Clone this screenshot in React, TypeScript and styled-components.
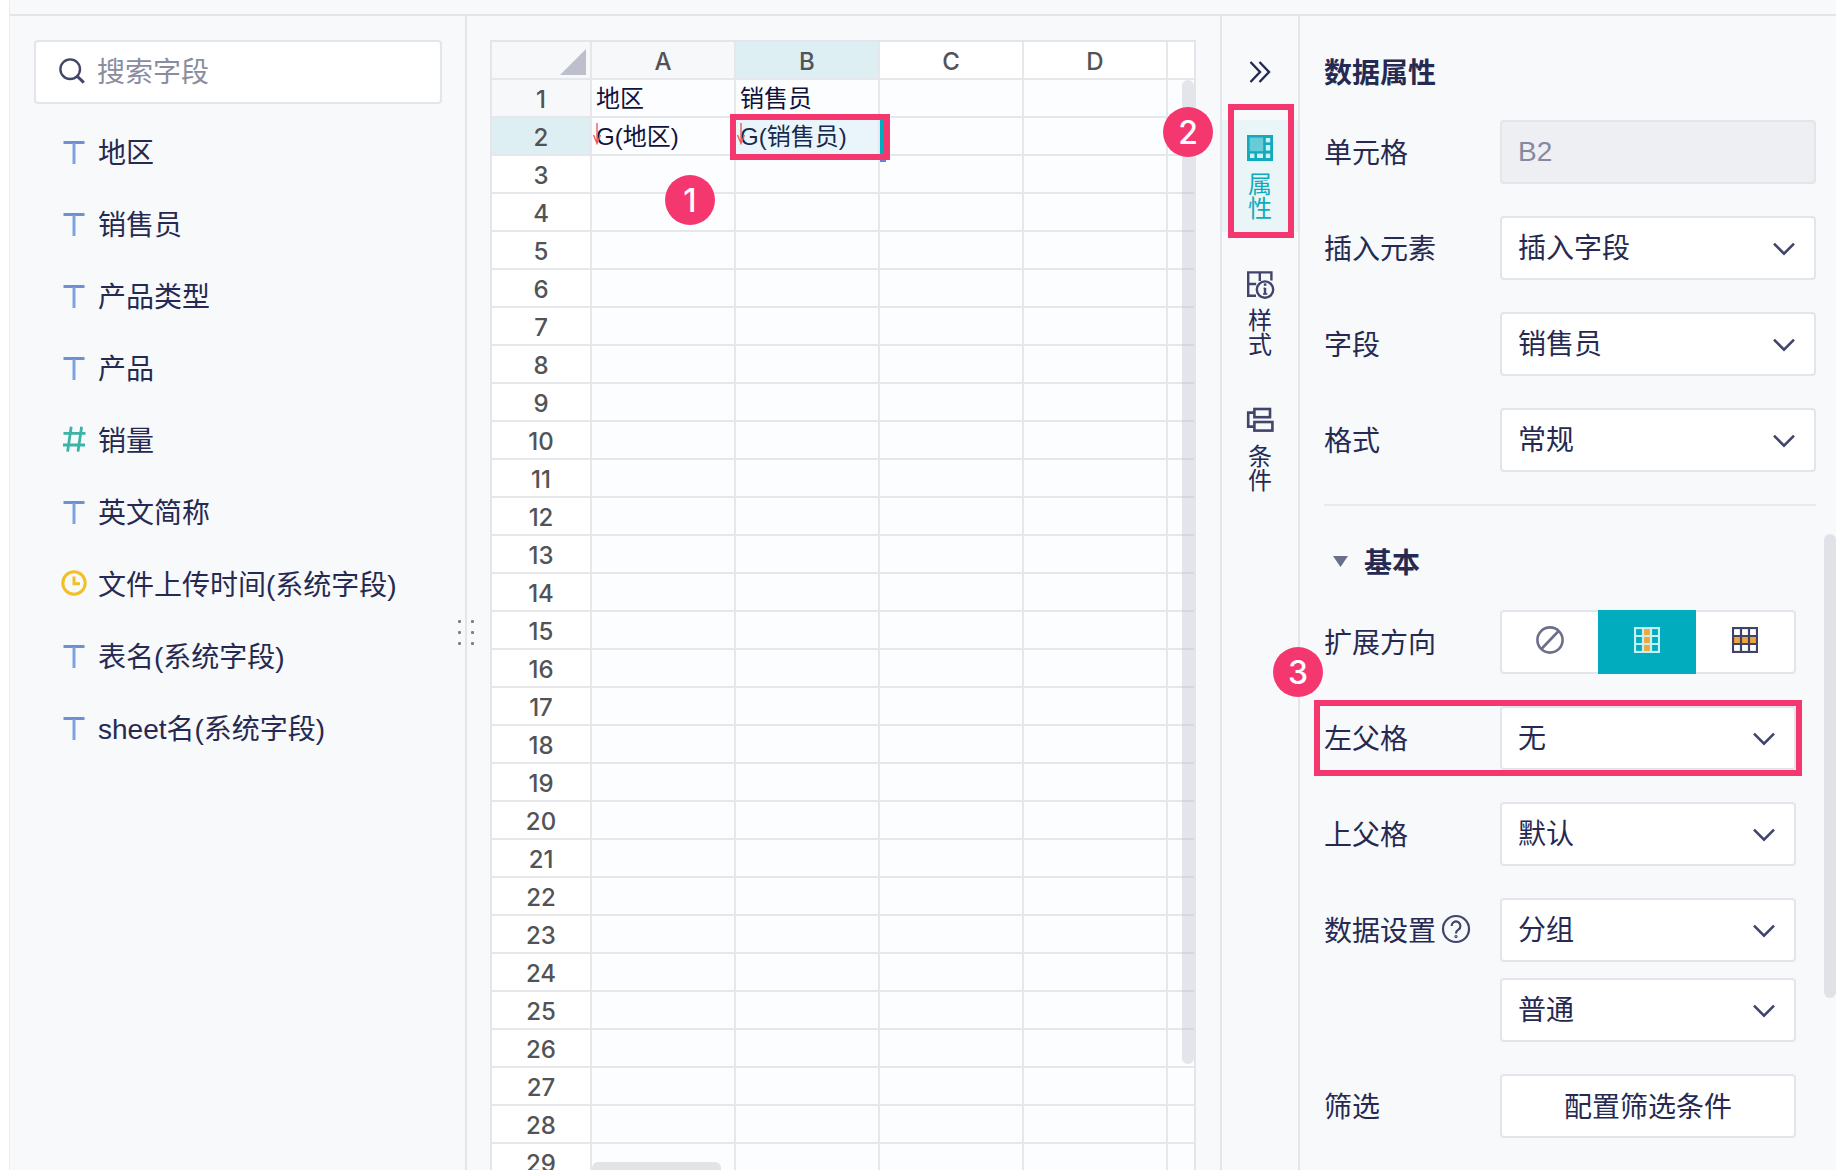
import React from 'react';
import styled, { createGlobalStyle, css } from 'styled-components';

const color = {
  text: '#262a52',
  muted: '#8a8d9f',
  line: '#e3e5eb',
  grid: '#e6e7ea',
  panel: '#f7f9fb',
  white: '#ffffff',
  teal: '#02acbf',
  mark: '#f5376f',
  headOn: '#deeff3',
  icon: '#41456a',
};

const cjk = '"Noto Sans CJK SC", sans-serif';

const Global = createGlobalStyle`
  *, *::before, *::after { box-sizing: border-box; }
  body { margin: 0; background: #ffffff; }
  body, button, input, select {
    font-family: "Liberation Sans", ${cjk};
    font-size: 28px;
    color: ${color.text};
  }
  h2, h3, ul, fieldset { margin: 0; padding: 0; border: 0; min-width: 0; }
`;

const Page = styled.div`
  display: flex;
  flex-direction: column;
  height: 100vh;
  margin-left: 9px;
  border-left: 1px solid #eaecf0;
  background: ${color.panel};
  overflow: hidden;
`;

const TopBar = styled.header`
  flex: 0 0 16px;
  border-bottom: 2px solid ${color.line};
`;

const Body = styled.div`
  flex: 1;
  min-height: 0;
  display: flex;
`;

/* ---------- field list ---------- */

const FieldPanel = styled.aside`
  position: relative;
  flex: 0 0 457px;
  min-width: 0;
  padding: 24px 23px 0 24px;
  border-right: 2px solid ${color.line};
`;

const controlBox = css`
  height: 64px;
  border: 2px solid ${color.line};
  border-radius: 4px;
  background: ${color.white};
`;

const SearchBox = styled.label`
  ${controlBox}
  display: flex;
  align-items: center;
  gap: 12px;
  padding: 0 16px 0 23px;
`;

const SearchInput = styled.input`
  flex: 1;
  min-width: 0;
  height: 60px;
  padding: 2px 0 0;
  border: 0;
  outline: 0;
  background: transparent;
  &::placeholder { color: ${color.muted}; opacity: 1; }
`;

const FieldList = styled.ul`
  margin-top: 12px;
  list-style: none;
`;

const FieldItem = styled.li`
  display: flex;
  align-items: center;
  gap: 11px;
  height: 72px;
  padding: 0 0 2px 27px;
  cursor: grab;
`;

const DragHandle = styled.div`
  position: absolute;
  top: 604px;
  right: -9px;
  width: 16px;
  display: grid;
  grid-template-columns: 3px 3px;
  justify-content: space-between;
  row-gap: 8px;
  cursor: col-resize;
  i { width: 3px; height: 3px; border-radius: 1px; background: #7d7f8b; }
`;

/* ---------- sheet ---------- */

const SheetArea = styled.main`
  flex: 1;
  min-width: 0;
  display: flex;
  padding: 24px 24px 0 23px;
`;

const Sheet = styled.div`
  position: relative;
  flex: 1;
  min-width: 0;
  overflow: hidden;
  border: 2px solid ${color.line};
  border-bottom: 0;
  background: #fcfdff;
`;

const Table = styled.table`
  width: 100%;
  table-layout: fixed;
  border-collapse: separate;
  border-spacing: 0;
`;

const Col = styled.col<{ $w?: number }>`
  ${p => p.$w && `width: ${p.$w}px;`}
`;

const HeadCell = styled.th<{ $tone?: 'soft' | 'on' }>`
  height: 38px;
  padding: 3px 0 0;
  border-right: 2px solid ${color.grid};
  border-bottom: 2px solid ${color.grid};
  background: ${p => (p.$tone === 'on' ? color.headOn : p.$tone === 'soft' ? '#f7f8fa' : color.white)};
  color: #525356;
  font-family: Inter, sans-serif;
  font-size: 24px;
  line-height: 33px;
  font-weight: 500;
  text-align: center;
  &:last-child { border-right: 0; }
`;

const CornerMark = styled.svg`
  display: block;
  margin-left: auto;
  margin-right: 4px;
`;

const Cell = styled.td<{ $selected?: boolean }>`
  position: relative;
  height: 38px;
  padding: 2px 0 0 4px;
  border-right: 2px solid ${color.grid};
  border-bottom: 2px solid ${color.grid};
  background: ${p => (p.$selected ? '#eaf5fb' : 'transparent')};
  color: ${p => (p.$selected ? '#172a4d' : '#10123c')};
  font-size: 24px;
  line-height: 34px;
  white-space: nowrap;
  &:last-child { border-right: 0; }
`;

const ExpandArrow = styled.svg`
  position: absolute;
  left: 1px;
  top: 5px;
`;

const SelectionEdge = styled.span`
  position: absolute;
  top: 0;
  right: -8px;
  width: 6px;
  height: 44px;
  background: ${color.teal};
  border-bottom: 2px solid #6b7fe3;
`;

const Thumb = styled.span<{ $top: number; $length: number }>`
  position: absolute;
  top: ${p => p.$top}px;
  right: 0;
  width: 12px;
  height: ${p => p.$length}px;
  border-radius: 6px;
  background: rgba(190, 192, 202, 0.4);
`;

const BottomThumb = styled.span`
  position: absolute;
  left: 100px;
  bottom: 0;
  width: 129px;
  height: 8px;
  border-radius: 6px 6px 0 0;
  background: #e3e4e8;
`;

/* ---------- numbered marks ---------- */

type Inset = [number, number, number, number];

const MarkFrame = styled.span<{ $inset: Inset }>`
  position: absolute;
  inset: ${p => p.$inset.map(n => `${n}px`).join(' ')};
  z-index: 2;
  border: 6px solid ${color.mark};
  pointer-events: none;
`;

const MarkBadge = styled.span<{ $left: number; $top: number }>`
  position: absolute;
  left: ${p => p.$left}px;
  top: ${p => p.$top}px;
  z-index: 3;
  width: 50px;
  height: 50px;
  border-radius: 50%;
  background: ${color.mark};
  color: ${color.white};
  font-family: Inter, sans-serif;
  font-size: 32px;
  line-height: 51px;
  font-weight: 500;
  text-align: center;
  pointer-events: none;
`;

/* ---------- tab rail ---------- */

const Rail = styled.nav`
  flex: 0 0 80px;
  display: flex;
  flex-direction: column;
  padding-top: 36px;
  border: solid ${color.line};
  border-width: 0 2px;
`;

const plainButton = css`
  padding: 0;
  border: 0;
  background: transparent;
  cursor: pointer;
`;

const CollapseButton = styled.button`
  ${plainButton}
  display: grid;
  place-items: center;
  height: 40px;
  margin-bottom: 28px;
`;

const RailTab = styled.button<{ $active?: boolean }>`
  ${plainButton}
  position: relative;
  display: flex;
  flex-direction: column;
  align-items: center;
  gap: 12px;
  height: 112px;
  padding-top: 15px;
  margin-bottom: 24px;
  background: ${p => (p.$active ? '#eaf5f7' : 'transparent')};
  color: ${p => (p.$active ? '#12aabc' : color.text)};
`;

const RailLabel = styled.span`
  width: 24px;
  font-size: 24px;
  line-height: 24px;
  word-break: break-all;
`;

/* ---------- properties ---------- */

const Props = styled.section`
  position: relative;
  flex: 0 0 536px;
  padding: 24px 20px 0 24px;
`;

const Title = styled.h2`
  height: 64px;
  margin-bottom: 16px;
  padding-top: 2px;
  font-size: 28px;
  line-height: 64px;
`;

const Rows = styled.div<{ $inner?: boolean }>`
  display: flex;
  flex-direction: column;
  gap: 32px;
  padding-right: ${p => (p.$inner ? 20 : 0)}px;
`;

const Row = styled.div`
  position: relative;
  display: grid;
  grid-template-columns: 176px 1fr;
`;

const LabelCell = styled.div`
  display: flex;
  align-items: center;
  gap: 5px;
  height: 64px;
  padding-bottom: 2px;
`;

const Stack = styled.div`
  display: grid;
  gap: 16px;
`;

const SelectWrap = styled.div`
  position: relative;
  display: grid;
`;

const Select = styled.select`
  ${controlBox}
  appearance: none;
  padding: 0 56px 0 16px;
  outline: 0;
`;

const Chevron = styled.svg`
  position: absolute;
  right: 21px;
  top: 20px;
  pointer-events: none;
`;

const TextBox = styled.input`
  ${controlBox}
  width: 100%;
  padding: 0 16px;
  &:disabled { background: #edeff3; color: #8489a1; }
`;

const Divider = styled.hr`
  height: 2px;
  margin: 32px 0 24px;
  border: 0;
  background: #e8eaee;
`;

const Section = styled.h3`
  height: 64px;
  margin-bottom: 16px;
  font-size: 28px;
`;

const SectionToggle = styled.button`
  ${plainButton}
  display: flex;
  align-items: center;
  gap: 16px;
  height: 64px;
  padding-left: 9px;
  padding-bottom: 2px;
  font-weight: 700;
`;

const Segments = styled.fieldset`
  ${controlBox}
  display: grid;
  grid-template-columns: 96px 98px 1fr;
  height: 64px;
  border: 2px solid ${color.line};
`;

const Segment = styled.label<{ $active?: boolean }>`
  position: relative;
  display: grid;
  place-items: center;
  padding-bottom: 4px;
  cursor: pointer;
  ${p => p.$active && css`
    margin: -2px 0;
    background: ${color.teal};
  `}
  input {
    position: absolute;
    inset: 0;
    width: 100%;
    height: 100%;
    margin: 0;
    opacity: 0;
    cursor: pointer;
  }
`;

const ActionButton = styled.button`
  ${controlBox}
  padding: 0 0 2px;
  cursor: pointer;
`;

const HelpButton = styled.button`
  ${plainButton}
  display: grid;
`;

/* ---------- icons ---------- */

const SearchIcon = () => (
  <svg width="26" height="28" viewBox="0 0 26 28" fill="none" stroke={color.icon} strokeWidth="2.4">
    <circle cx="11.2" cy="11.2" r="9.8" />
    <path d="M18 18l6.8 6.6" strokeWidth="3" />
  </svg>
);

const FieldIcon = ({ kind }: { kind: string }) => {
  if (kind === 'number') {
    return (
      <svg width="26" height="26" viewBox="0 0 26 26" fill="none" stroke="#3bb3a6" strokeWidth="2.8">
        <path d="M2.5 7.4h22M2 19h22M10.2 .8L6.6 25.6M20.6 .8L17 25.6" />
      </svg>
    );
  }
  if (kind === 'time') {
    return (
      <svg width="26" height="26" viewBox="0 0 26 26" fill="none" stroke="#f3bf22" strokeWidth="3">
        <circle cx="13" cy="13" r="11.2" />
        <path d="M13 6.6V13.8H19" />
      </svg>
    );
  }
  return (
    <svg width="26" height="26" viewBox="0 0 26 26" fill="none" stroke="#6d90d3" strokeWidth="3">
      <path d="M2.5 4.5h21" />
      <path d="M13 5v21" stroke="#82a2de" />
    </svg>
  );
};

const CollapseIcon = () => (
  <svg width="22" height="22" viewBox="0 0 22 22" fill="none" stroke={color.text} strokeWidth="2.4">
    <path d="M1.5 1l9.5 10-9.5 10M10.5 1l9.5 10-9.5 10" />
  </svg>
);

const AttributeIcon = () => (
  <svg width="26" height="26" viewBox="0 0 26 26">
    <rect width="26" height="26" fill="#12aabc" />
    <rect x="2.6" y="2.6" width="13.6" height="13.6" fill="#67ccd7" />
    <g fill="#cdf1f4">
      <rect x="18.8" y="3" width="4.4" height="4.4" />
      <rect x="18.8" y="10" width="4.4" height="5.6" />
      <rect x="18.8" y="18.6" width="4.4" height="4.4" />
      <rect x="10" y="18.6" width="6" height="4.4" />
      <rect x="3" y="18.6" width="4.4" height="4.4" />
    </g>
  </svg>
);

const StyleIcon = () => (
  <svg width="28" height="26" viewBox="0 0 28 26" overflow="visible" fill="none" stroke={color.icon} strokeWidth="2.4">
    <path d="M10 24.8H2.2V1.4h23.2v8M2.2 13h8M13.8 1.4v8.6" />
    <circle cx="19" cy="18.6" r="8.2" />
    <path d="M19 17V23.4" strokeWidth="2.4" />
    <path d="M17.6 17.4h1.6M17 23h4.4" strokeWidth="1.6" />
    <path d="M17.8 13.6h2.6" strokeWidth="2.4" />
  </svg>
);

const ConditionIcon = () => (
  <svg width="28" height="26" viewBox="0 0 28 26" fill="none" stroke={color.icon} strokeWidth="2.6">
    <rect x="8.4" y="2" width="15.6" height="8.2" />
    <rect x="8.4" y="15" width="18" height="8.6" />
    <path d="M8.4 5.6H2.2v14h6.2" />
  </svg>
);

const ChevronIcon = () => (
  <Chevron width="22" height="24" viewBox="0 0 22 24" fill="none" stroke={color.icon} strokeWidth="2.6">
    <path d="M1 7.6L11 17.6 21 7.6" />
  </Chevron>
);

const ForbidIcon = () => (
  <svg width="28" height="28" viewBox="0 0 28 28" fill="none" stroke="#6b6f8a" strokeWidth="2.6">
    <circle cx="14" cy="14" r="12.6" />
    <path d="M5.4 23L22.6 5" />
  </svg>
);

const GridIcon = ({ stroke, across }: { stroke: string; across?: boolean }) => (
  <svg width="26" height="26" viewBox="0 0 26 26" fill="none" stroke={stroke} strokeWidth="2.2">
    {across
      ? <rect x="1" y="9" width="24" height="8" fill="#f2a53a" stroke="none" />
      : <rect x="9" y="1" width="8" height="24" fill="#f2a53a" stroke="none" />}
    <rect x="1" y="1" width="24" height="24" />
    <path d="M9 1v24M17 1v24M1 9h24M1 17h24" />
  </svg>
);

const HelpIcon = () => (
  <svg width="30" height="30" viewBox="0 0 30 30" fill="none" stroke={color.icon} strokeWidth="2.2">
    <circle cx="15" cy="15" r="13" />
    <path d="M10.6 12a4.4 4.4 0 1 1 6.8 3.6c-1.6 1-2.4 1.8-2.4 3.8" />
    <circle cx="15" cy="22.6" r=".6" />
  </svg>
);

/* ---------- data ---------- */

const fields = [
  { name: '地区', kind: 'text' },
  { name: '销售员', kind: 'text' },
  { name: '产品类型', kind: 'text' },
  { name: '产品', kind: 'text' },
  { name: '销量', kind: 'number' },
  { name: '英文简称', kind: 'text' },
  { name: '文件上传时间(系统字段)', kind: 'time' },
  { name: '表名(系统字段)', kind: 'text' },
  { name: 'sheet名(系统字段)', kind: 'text' },
];

const columns = ['A', 'B', 'C', 'D', ''];
const rowNumbers = Array.from({ length: 29 }, (_, i) => i + 1);
const cells: Record<string, string> = {
  A1: '地区',
  B1: '销售员',
  A2: 'G(地区)',
  B2: 'G(销售员)',
};

/* ---------- parts ---------- */

const Arrow = () => (
  <ExpandArrow width="8" height="22" viewBox="0 0 8 22" fill="none" stroke="#f25a5a" strokeWidth="1.4">
    <path d="M4 0v20M.5 12L4 20.5 7.5 12" />
  </ExpandArrow>
);

const SheetCell = ({ id }: { id: string }) => {
  const selected = id === 'B2';
  const value = cells[id];
  return (
    <Cell $selected={selected}>
      {value}
      {value && value.startsWith('G(') && <Arrow />}
      {selected && (
        <>
          <SelectionEdge />
          <MarkFrame $inset={[-4, -12, -6, -6]} />
          <MarkBadge $left={-71} $top={57}>1</MarkBadge>
        </>
      )}
    </Cell>
  );
};

const Dropdown = ({ id, value, label }: { id: string; value: string; label?: string }) => (
  <SelectWrap>
    <Select id={id} defaultValue={value} aria-label={label}>
      <option>{value}</option>
    </Select>
    <ChevronIcon />
  </SelectWrap>
);

const SelectRow = ({ id, label, value, children }: {
  id: string; label: string; value: string; children?: React.ReactNode;
}) => (
  <Row>
    <LabelCell><label htmlFor={id}>{label}</label></LabelCell>
    <Dropdown id={id} value={value} />
    {children}
  </Row>
);

export default function App() {
  const [direction, setDirection] = React.useState('down');
  return (
    <>
      <Global />
      <Page>
        <TopBar />
        <Body>
          <FieldPanel>
            <SearchBox>
              <SearchIcon />
              <SearchInput type="text" placeholder="搜索字段" />
            </SearchBox>
            <FieldList>
              {fields.map(f => (
                <FieldItem key={f.name}>
                  <FieldIcon kind={f.kind} />
                  <span>{f.name}</span>
                </FieldItem>
              ))}
            </FieldList>
            <DragHandle><i /><i /><i /><i /><i /><i /></DragHandle>
          </FieldPanel>

          <SheetArea>
            <Sheet>
              <Table>
                <colgroup>
                  <Col $w={100} />
                  <Col $w={144} />
                  <Col $w={144} />
                  <Col $w={144} />
                  <Col $w={144} />
                  <Col />
                </colgroup>
                <thead>
                  <tr>
                    <HeadCell $tone="soft">
                      <CornerMark width="26" height="26" viewBox="0 0 26 26">
                        <path d="M26 0v26H0z" fill="#bdc0cc" />
                      </CornerMark>
                    </HeadCell>
                    {columns.map(c => (
                      <HeadCell key={c} $tone={c === 'B' ? 'on' : c === 'A' ? 'soft' : undefined}>{c}</HeadCell>
                    ))}
                  </tr>
                </thead>
                <tbody>
                  {rowNumbers.map(n => (
                    <tr key={n}>
                      <HeadCell $tone={n === 2 ? 'on' : n === 1 ? 'soft' : undefined}>{n}</HeadCell>
                      {columns.map(c => <SheetCell key={c} id={`${c}${n}`} />)}
                    </tr>
                  ))}
                </tbody>
              </Table>
              <Thumb $top={38} $length={984} />
              <BottomThumb />
            </Sheet>
          </SheetArea>

          <Rail>
            <CollapseButton type="button" aria-label="收起"><CollapseIcon /></CollapseButton>
            <RailTab type="button" $active>
              <AttributeIcon />
              <RailLabel>属性</RailLabel>
              <MarkFrame $inset={[-16, 4, -6, 6]} />
              <MarkBadge $left={-59} $top={-13}>2</MarkBadge>
            </RailTab>
            <RailTab type="button">
              <StyleIcon />
              <RailLabel>样式</RailLabel>
            </RailTab>
            <RailTab type="button">
              <ConditionIcon />
              <RailLabel>条件</RailLabel>
            </RailTab>
          </Rail>

          <Props>
            <Title>数据属性</Title>
            <Rows>
              <Row>
                <LabelCell><label htmlFor="cell">单元格</label></LabelCell>
                <TextBox id="cell" type="text" value="B2" disabled readOnly />
              </Row>
              <SelectRow id="element" label="插入元素" value="插入字段" />
              <SelectRow id="field" label="字段" value="销售员" />
              <SelectRow id="format" label="格式" value="常规" />
            </Rows>
            <Divider />
            <Section>
              <SectionToggle type="button">
                <svg width="15" height="11" viewBox="0 0 15 11"><path d="M0 0h15L7.5 11z" fill="#6b6f8e" /></svg>
                基本
              </SectionToggle>
            </Section>
            <Rows $inner>
              <Row>
                <LabelCell id="direction">扩展方向</LabelCell>
                <Segments aria-labelledby="direction">
                  {['none', 'down', 'right'].map(d => (
                    <Segment key={d} $active={direction === d}>
                      <input type="radio" name="direction" checked={direction === d} onChange={() => setDirection(d)} />
                      {d === 'none' && <ForbidIcon />}
                      {d === 'down' && <GridIcon stroke={direction === d ? '#c3f1f4' : '#3f4366'} />}
                      {d === 'right' && <GridIcon stroke={direction === d ? '#c3f1f4' : '#3f4366'} across />}
                    </Segment>
                  ))}
                </Segments>
              </Row>
              <SelectRow id="left" label="左父格" value="无">
                <MarkFrame $inset={[-6, -6, -6, -10]} />
                <MarkBadge $left={-51} $top={-59}>3</MarkBadge>
              </SelectRow>
              <SelectRow id="top" label="上父格" value="默认" />
              <Row>
                <LabelCell>
                  <label htmlFor="setting">数据设置</label>
                  <HelpButton type="button" aria-label="帮助"><HelpIcon /></HelpButton>
                </LabelCell>
                <Stack>
                  <Dropdown id="setting" value="分组" />
                  <Dropdown id="mode" value="普通" label="数据设置" />
                </Stack>
              </Row>
              <Row>
                <LabelCell><label htmlFor="filter">筛选</label></LabelCell>
                <ActionButton id="filter" type="button">配置筛选条件</ActionButton>
              </Row>
            </Rows>
            <Thumb $top={518} $length={464} />
          </Props>
        </Body>
      </Page>
    </>
  );
}
